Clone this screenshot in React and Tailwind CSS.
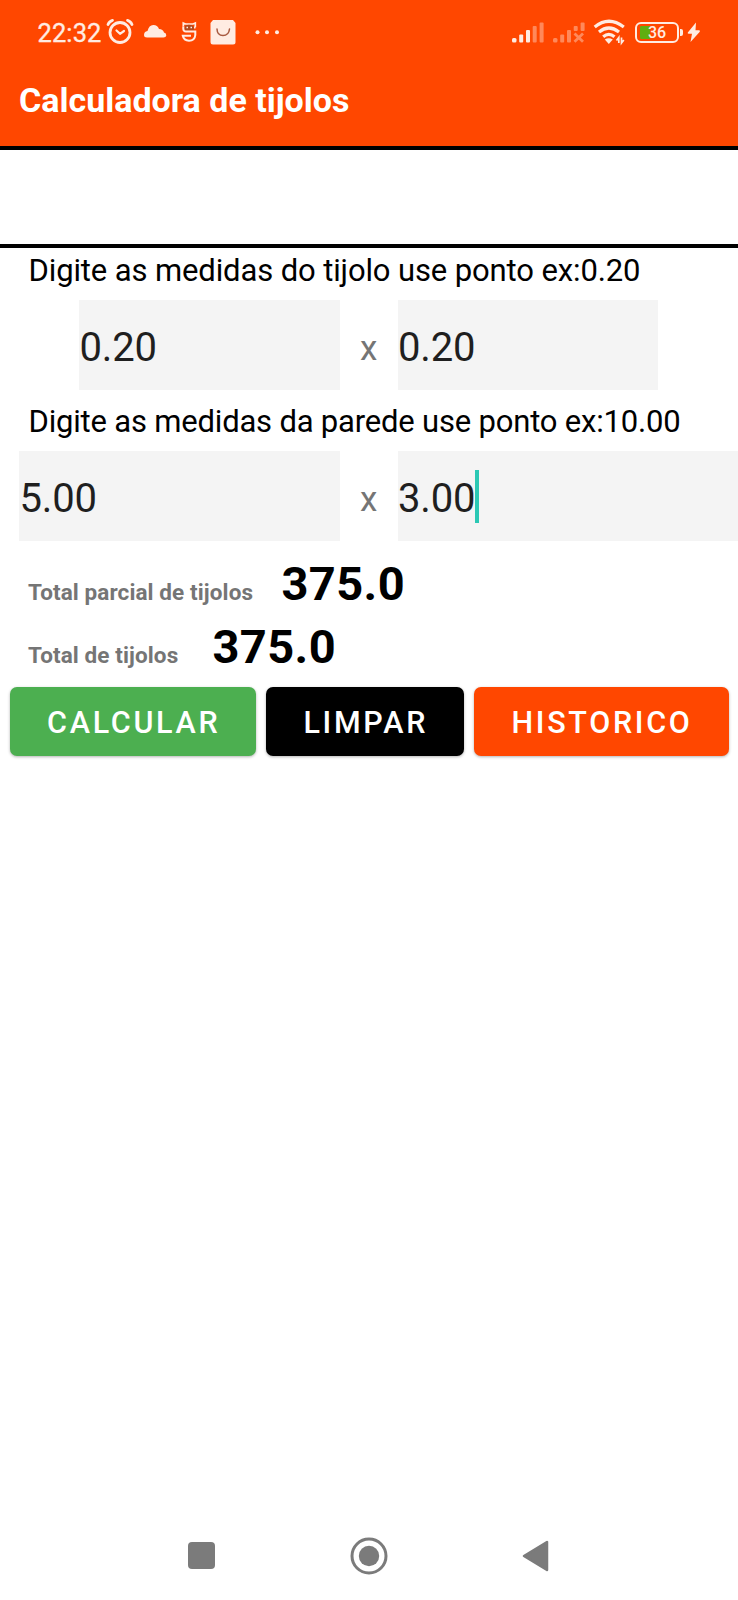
import React from "react";

function StatusBar() {
  return (
    <div className="flex h-[64px] items-center text-[#ffece2]">
      <span className="ml-[37.5px] w-[68.5px] whitespace-nowrap pt-[1px] text-[25.5px] leading-[30px] tracking-[0.1px] [-webkit-text-stroke:0.3px_currentColor]">22:32</span>
      <svg width="28" height="28" viewBox="0 0 28 28" fill="none" stroke="currentColor" strokeWidth="2.8" strokeLinecap="round" strokeLinejoin="round">
        <circle cx="14" cy="14.5" r="10" />
        <path d="M10.5 12.5 L14 15.8 L18 13" strokeWidth="2.2" />
        <path d="M2 6.5 Q3.5 3.2 6.5 2.4 M26 6.5 Q24.500 3.2 21.500 2.400" />
      </svg>
      <svg className="ml-[9px]" width="24" height="28" viewBox="0 0 24 28" fill="currentColor">
        <path d="M4 19.500 Q1 19.500 1 17 Q1 13.500 4.500 13 Q6 6.800 10.500 7 Q14.500 7.200 16 11 Q20 11 21 14.500 Q23.500 15 23.300 17.500 Q23 19.500 20.500 19.500 Z" />
      </svg>
      <svg className="ml-[13px]" width="18" height="28" viewBox="0 0 18 28">
        <path d="M3.300 8.500 V5 L5.500 6 H13 L15.300 5 V9.300" fill="none" stroke="currentColor" strokeWidth="1.700" />
        <path d="M4.500 12.500 V9.500 Q5 6.800 9 6.800 Q13 6.800 13.800 9.500 V12.500 Z" fill="#b04a20" />
        <path d="M6.500 9.500 h1.500 M10.500 9.500 h1.500" stroke="currentColor" strokeWidth="1.300" />
        <path d="M15.500 9.500 H14 M3.300 8.500 V11 Q3.500 13.500 6 13.500 H15.300 V17 Q14.800 22.700 9 22.700 Q3.800 22.700 2.800 17.800 H11" fill="none" stroke="currentColor" strokeWidth="2" />
      </svg>
      <svg className="ml-[12px]" width="26" height="28" viewBox="0 0 26 28">
        <path d="M3 2 H23 L25.500 5 V24 Q25.500 26.500 23 26.500 H3 Q0.500 26.500 0.500 24 V5 Z" fill="currentColor" />
        <path d="M7 11 Q7.200 17.500 13 17.500 Q18.800 17.500 19.500 11" fill="none" stroke="#a85a40" strokeWidth="1.500" strokeLinecap="round" />
      </svg>
      <svg className="ml-[18.5px]" width="25" height="28" viewBox="0 0 25 28" fill="currentColor">
        <circle cx="2.500" cy="14.300" r="2" />
        <circle cx="12" cy="14.300" r="2" />
        <circle cx="22" cy="14.300" r="2" />
      </svg>

      <svg className="ml-auto" width="34" height="28" viewBox="0 0 34 28" fill="currentColor">
        <rect x="1" y="20" width="4.500" height="4.500" rx="1.500" />
        <rect x="8.200" y="16.500" width="4" height="8" rx="1" />
        <rect x="15" y="12" width="4" height="12.500" rx="1" />
        <rect x="21.700" y="8" width="4" height="16.500" rx="1" opacity="0.4" />
        <rect x="28.600" y="4.500" width="4" height="20" rx="1" opacity="0.4" />
      </svg>
      <svg className="ml-[7px]" width="34" height="28" viewBox="0 0 34 28" fill="currentColor" opacity="0.4">
        <rect x="1" y="20" width="4.500" height="4.500" rx="1.500" />
        <rect x="8.200" y="16.500" width="4" height="8" rx="1" />
        <rect x="15" y="12" width="4" height="12.500" rx="1" />
        <rect x="21.700" y="8" width="4" height="5" rx="1" />
        <rect x="28.600" y="4.500" width="4" height="8.500" rx="1" />
        <path d="M22.500 15.500 L31 23.800 M31 15.500 L22.500 23.800" stroke="currentColor" strokeWidth="2.800" />
      </svg>
      <svg className="ml-[7px]" width="34" height="28" viewBox="0 0 34 28" fill="none" stroke="currentColor" strokeWidth="3.200">
        <path d="M1.700 9 Q15.800 -2.500 30.800 9" />
        <path d="M6 14 Q15.800 6 26 14" />
        <path d="M10.200 18.800 Q15.800 14 21.500 18.800" />
        <path d="M11.800 21.500 Q15.700 19 19.800 21.500 L15.800 26 Z" fill="currentColor" stroke="none" />
        <path d="M25.800 25 V19.500 L23.500 22.500 M28.500 19.500 V25 L30.800 22" strokeWidth="1.700" />
      </svg>
      <div className="ml-[8px] flex h-[21px] w-[44px] items-center rounded-[6px] border-2 border-current bg-[linear-gradient(90deg,#5fae10_0_10px,transparent_10px)] bg-clip-content bg-origin-content px-[3px] py-[2px] leading-none">
        <span className="w-full pt-px text-center text-[16px] font-medium leading-[12px]">36</span>
      </div>
      <div className="ml-[1px] h-[7px] w-[3px] rounded-r-[2px] bg-current" />
      <svg className="ml-[4px] mr-[37px]" width="14" height="28" viewBox="0 0 14 28" fill="currentColor">
        <path d="M9 4.500 L0.800 14.500 Q0.300 15.700 1.800 15.700 H5 L3.500 24 L12.800 13.700 Q13.300 12.300 11.800 12.300 H8.500 Z" />
      </svg>
    </div>
  );
}

function NumberField({ value, className, caret = false }) {
  return (
    <div className={"flex h-[90px] shrink-0 items-center bg-[#f4f4f4] " + className}>
      <span className="pl-[0.5px] pt-[5px] text-[40px] leading-[85px] tracking-[-0.2px] text-[#1f1f1f]">{value}</span>
      {caret && <span className="h-[53px] w-[4px] bg-[#2bc8b4]" />}
    </div>
  );
}

function Times() {
  return <span className="h-[90px] w-[57.5px] shrink-0 pt-[7px] text-center text-[35px] leading-[83px] text-[#757575]">x</span>;
}

function Result({ label, value, labelWidth }) {
  return (
    <div className="flex h-[63px] items-baseline pl-[28px]">
      <span className={"shrink-0 whitespace-nowrap text-[22.5px] font-bold tracking-[0.1px] text-[#757575] " + labelWidth}>{label}</span>
      <span className="text-[47px] font-bold leading-[63px] tracking-[0.4px] text-black">{value}</span>
    </div>
  );
}

function Button({ children, className }) {
  return (
    <button className={"h-[68.5px] rounded-[7px] pl-[2px] pt-[3px] text-[30.5px] font-medium leading-[65px] tracking-[2.7px] text-white shadow-[0_1px_3px_rgba(0,0,0,0.3)] " + className}>
      {children}
    </button>
  );
}

export default function App() {
  return (
    <div className="flex h-[1600px] w-[738px] flex-col overflow-hidden bg-white font-['Roboto',sans-serif]">
      <header className="h-[150px] border-b-4 border-black bg-[#ff4700]">
        <StatusBar />
        <h1 className="pl-[19px] pt-[6px] text-[34px] font-bold leading-[60px] text-white">Calculadora de tijolos</h1>
      </header>
      <div className="h-[98px] border-b-4 border-black" />
      <main>
        <p className="h-[52px] whitespace-nowrap pl-[28.5px] text-[31px] leading-[46px] tracking-[-0.12px] text-black">Digite as medidas do tijolo use ponto ex:0.20</p>
        <div className="flex pl-[79px]">
          <NumberField value="0.20" className="w-[261px]" />
          <Times />
          <NumberField value="0.20" className="w-[260px]" />
        </div>
        <p className="h-[61px] whitespace-nowrap pl-[28.5px] pt-[2px] text-[31px] leading-[60px] tracking-[-0.19px] text-black">Digite as medidas da parede use ponto ex:10.00</p>
        <div className="flex pl-[19px]">
          <NumberField value="5.00" className="w-[321px]" />
          <Times />
          <NumberField value="3.00" className="w-[340.5px]" caret />
        </div>
        <div className="pt-[11px]">
          <Result label="Total parcial de tijolos" value="375.0" labelWidth="w-[253.5px]" />
          <Result label="Total de tijolos" value="375.0" labelWidth="w-[184.5px]" />
        </div>
        <div className="flex gap-[10px] pl-[9.5px] pt-[9px]">
          <Button className="w-[246.5px] bg-[#4caf50]">CALCULAR</Button>
          <Button className="w-[197.5px] bg-black">LIMPAR</Button>
          <Button className="w-[255px] bg-[#ff4700]">HISTORICO</Button>
        </div>
      </main>
      <nav className="mt-auto flex h-[89px] items-center pl-[188px] text-[#7b7b7b]">
        <div className="h-[27px] w-[27px] rounded-[4px] bg-current" />
        <svg className="ml-[135px]" width="38" height="38" viewBox="0 0 38 38">
          <circle cx="19" cy="19" r="17" fill="none" stroke="currentColor" strokeWidth="3" />
          <circle cx="19" cy="19" r="10.200" fill="currentColor" />
        </svg>
        <svg className="ml-[134px]" width="27" height="32" viewBox="0 0 27 32">
          <path d="M2 16 L25 2 V30 Z" fill="currentColor" stroke="currentColor" strokeWidth="2.500" strokeLinejoin="round" />
        </svg>
      </nav>
    </div>
  );
}
